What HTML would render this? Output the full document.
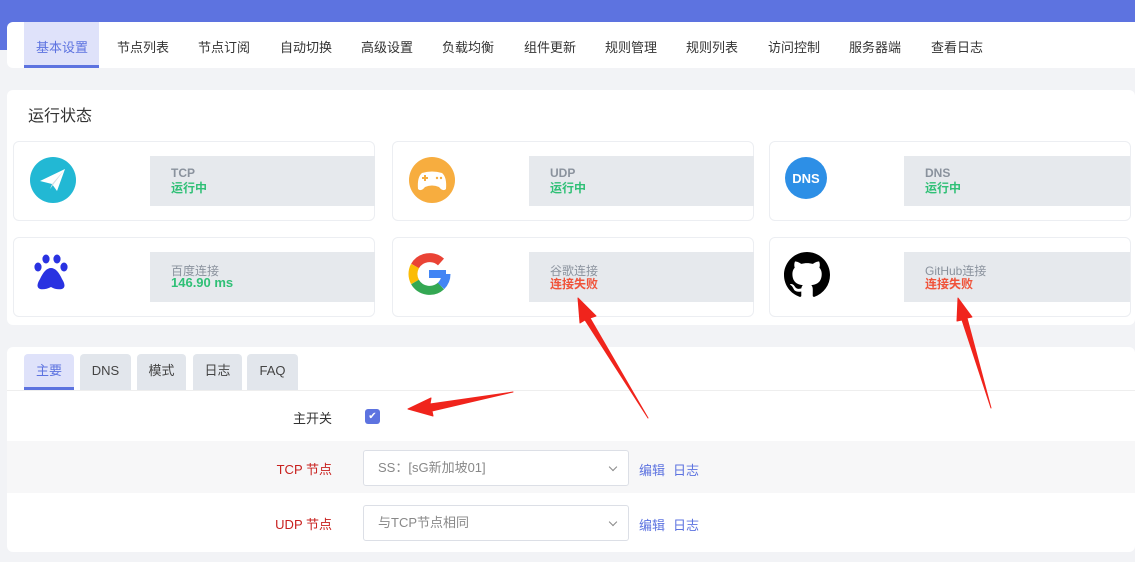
<!DOCTYPE html>
<html><head><meta charset="utf-8"><style>
*{margin:0;padding:0;box-sizing:border-box}
body{width:1135px;height:562px;overflow:hidden;background:#f2f3f6;font-family:"Liberation Sans","Noto Sans CJK SC",sans-serif;position:relative}
.abs{position:absolute}
.top{left:0;top:0;width:1135px;height:50px;background:#5d73e0}
.nav{left:7px;top:22px;width:1128px;height:46px;background:#fff;border-radius:6px 0 0 6px}
.nav span{position:absolute;top:15px;font-size:13px;color:#333}
.act{left:17px;top:0;width:75px;height:46px;background:#dfe2fa;border-bottom:3px solid #5d73e0}
.panel{background:#fff;border-radius:6px}
.card{background:#fff;border:1px solid #eceef2;border-radius:6px;width:362px;height:80px}
.gb{position:absolute;left:136px;top:14px;width:225px;height:50px;background:#e6e9ed}
.gb .a{position:absolute;left:21px;top:10px;font-size:12px;color:#8a929d;font-weight:bold}
.gb .a.n{font-weight:normal}
.gb .b{position:absolute;left:21px;top:23px;font-size:12px;font-weight:bold;color:#2fc076}
.gb .b.r{color:#f0533a}
.ic{position:absolute;left:16px;top:15px;width:46px;height:46px}
.tab{position:absolute;top:354px;height:36px;background:#e2e6ec;border-radius:4px 4px 0 0;font-size:13px;color:#444;text-align:center;line-height:34px}
.lbl{position:absolute;font-size:13px;text-align:right;width:120px}
.sel{position:absolute;left:363px;width:266px;height:36px;border:1px solid #dcdfe6;border-radius:3px;background:#fff;font-size:13px;color:#888;line-height:34px;padding-left:14px}
.sel:after{content:"";position:absolute;right:12px;top:13px;width:5px;height:5px;border-right:1.5px solid #888;border-bottom:1.5px solid #888;transform:rotate(45deg)}
.lk{position:absolute;font-size:12px;color:#5d73e0}
</style></head><body>
<div class="abs top"></div>
<div class="abs nav">
 <div class="abs act"></div>
 <span style="left:29px;color:#5d73e0">基本设置</span>
 <span style="left:110px">节点列表</span>
 <span style="left:191px">节点订阅</span>
 <span style="left:273px">自动切换</span>
 <span style="left:354px">高级设置</span>
 <span style="left:435px">负载均衡</span>
 <span style="left:517px">组件更新</span>
 <span style="left:598px">规则管理</span>
 <span style="left:679px">规则列表</span>
 <span style="left:761px">访问控制</span>
 <span style="left:842px">服务器端</span>
 <span style="left:924px">查看日志</span>
</div>
<div class="abs panel" style="left:7px;top:90px;width:1128px;height:235px"></div>
<div class="abs" style="left:28px;top:102px;font-size:16px;color:#333">运行状态</div>

<div class="abs card" style="left:13px;top:141px">
 <svg class="ic" viewBox="0 0 46 46"><circle cx="23" cy="23" r="23" fill="#22b8d4"/><path d="M10 24 L35 12 L27 34 L22 27 Z" fill="#fff"/><path d="M22 27 L35 12 L20 32Z" fill="#d6dde2"/></svg>
 <div class="gb"><div class="a">TCP</div><div class="b">运行中</div></div>
</div>
<div class="abs card" style="left:392px;top:141px">
 <svg class="ic" viewBox="0 0 46 46"><circle cx="23" cy="23" r="23" fill="#f7ad3f"/><path d="M13 16 Q23 13 33 16 Q38 20 37 32 Q34 35 30 30 Q23 27 16 30 Q12 35 9 32 Q8 20 13 16Z" fill="#fff"/><path d="M13 21h6M16 18v6" stroke="#f7ad3f" stroke-width="2"/><circle cx="28" cy="21" r="1.2" fill="#f7ad3f"/><circle cx="32" cy="21" r="1.2" fill="#f7ad3f"/></svg>
 <div class="gb"><div class="a">UDP</div><div class="b">运行中</div></div>
</div>
<div class="abs card" style="left:769px;top:141px">
 <svg class="ic" style="left:14px;top:14px;width:44px;height:44px" viewBox="0 0 44 44"><circle cx="22" cy="22" r="21" fill="#2d8fe6"/><text x="22" y="27" font-size="13" font-weight="bold" fill="#fff" text-anchor="middle" font-family="Liberation Sans">DNS</text></svg>
 <div class="gb" style="left:134px;width:226px"><div class="a">DNS</div><div class="b">运行中</div></div>
</div>

<div class="abs card" style="left:13px;top:237px">
 <svg class="ic" style="left:18px;top:14px;width:40px;height:46px" viewBox="0 0 40 46"><ellipse cx="6" cy="15" rx="3.6" ry="4.5" fill="#2932e1"/><ellipse cx="14" cy="7" rx="3.6" ry="4.5" fill="#2932e1"/><ellipse cx="25" cy="7" rx="3.6" ry="4.5" fill="#2932e1"/><ellipse cx="32" cy="15" rx="3.6" ry="4.5" fill="#2932e1"/><path d="M19 16 Q25 16 30 27 Q35 35 30 37 Q24 38 19 35 Q13 38 8 37 Q3 35 8 27 Q13 16 19 16Z" fill="#2932e1"/></svg>
 <div class="gb"><div class="a n">百度连接</div><div class="b" style="font-size:13px">146.90 ms</div></div>
</div>
<div class="abs card" style="left:392px;top:237px">
 <svg class="ic" style="left:14px;top:14px;width:44px;height:44px" viewBox="0 0 44 44"><g fill="none" stroke-width="9"><path d="M34 10 A17 17 0 0 0 8 14" stroke="#ea4335"/><path d="M8 14 A17 17 0 0 0 8 30" stroke="#fbbc05"/><path d="M8 30 A17 17 0 0 0 34 34" stroke="#34a853"/><path d="M34 34 A17 17 0 0 0 39 22" stroke="#4285f4"/></g><rect x="22" y="18" width="17" height="8" fill="#4285f4"/></svg>
 <div class="gb"><div class="a n">谷歌连接</div><div class="b r">连接失败</div></div>
</div>
<div class="abs card" style="left:769px;top:237px">
 <svg class="ic" style="left:14px;top:14px;width:46px;height:46px" viewBox="0 0 16 16"><path fill="#000" d="M8 0C3.58 0 0 3.58 0 8c0 3.54 2.29 6.53 5.47 7.59.4.07.55-.17.55-.38 0-.19-.01-.82-.01-1.49-2.01.37-2.53-.49-2.69-.94-.09-.23-.48-.94-.82-1.13-.28-.15-.68-.52-.01-.53.63-.01 1.08.58 1.23.82.72 1.21 1.87.87 2.33.66.07-.52.28-.87.51-1.07-1.78-.2-3.64-.89-3.64-3.95 0-.87.31-1.59.82-2.150-.08-.2-.36-1.02.08-2.12 0 0 .67-.21 2.2.82.64-.18 1.32-.27 2-.27.68 0 1.36.09 2 .27 1.53-1.04 2.2-.82 2.2-.82.44 1.1.16 1.92.08 2.12.51.56.82 1.27.82 2.15 0 3.07-1.87 3.75-3.65 3.95.29.25.54.73.54 1.48 0 1.07-.01 1.93-.01 2.2 0 .21.15.46.55.38A8.013 8.013 0 0016 8c0-4.42-3.58-8-8-8z"/></svg>
 <div class="gb" style="left:134px;width:226px"><div class="a n">GitHub连接</div><div class="b r">连接失败</div></div>
</div>

<div class="abs panel" style="left:7px;top:347px;width:1128px;height:205px"></div>
<div class="tab" style="left:24px;width:50px;background:#dfe2fa;color:#5d73e0;border-bottom:3px solid #5d73e0">主要</div>
<div class="tab" style="left:80px;width:51px">DNS</div>
<div class="tab" style="left:137px;width:49px">模式</div>
<div class="tab" style="left:193px;width:49px">日志</div>
<div class="tab" style="left:247px;width:51px">FAQ</div>
<div class="abs" style="left:7px;top:390px;width:1128px;height:1px;background:#eee"></div>
<div class="lbl" style="left:212px;top:408px;color:#333">主开关</div>
<div class="abs" style="left:365px;top:409px;width:15px;height:15px;border-radius:3px;background:#5d73e0;color:#fff;font-size:10px;text-align:center;line-height:15px">✔</div>
<div class="abs" style="left:7px;top:441px;width:1128px;height:52px;background:#f7f7f8"></div>
<div class="lbl" style="left:212px;top:459px;color:#c8201e">TCP 节点</div>
<div class="sel" style="top:450px">SS：[sG新加坡01]</div>
<div class="lk" style="left:639px;top:460px;font-size:13px">编辑</div><div class="lk" style="left:673px;top:460px;font-size:13px">日志</div>
<div class="lbl" style="left:212px;top:514px;color:#c8201e">UDP 节点</div>
<div class="sel" style="top:505px">与TCP节点相同</div>
<div class="lk" style="left:639px;top:515px;font-size:13px">编辑</div><div class="lk" style="left:673px;top:515px;font-size:13px">日志</div>

<svg class="abs" style="left:0;top:0" width="1135" height="562">
 <g fill="#f0241c" stroke="#f0241c" stroke-linejoin="round">
  <path d="M513 392 L430 404 L431 398 L408 409 L433 416 L432 411 Z" stroke-width="1"/>
  <path d="M648 418 L590 318 L596 316 L578 298 L580 323 L585 320 Z" stroke-width="1"/>
  <path d="M991 408 L967 318 L972 317 L958 298 L957 321 L962 320 Z" stroke-width="1"/>
 </g>
</svg>
</body></html>
